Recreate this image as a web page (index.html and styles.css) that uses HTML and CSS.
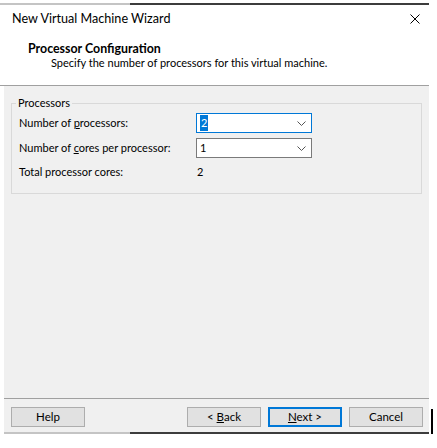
FILE: index.html
```html
<!DOCTYPE html>
<html lang="en">
<head>
<meta charset="utf-8">
<title>New Virtual Machine Wizard</title>
<link rel="stylesheet" href="styles.css">
</head>
<body>
<div class="window">
  <div class="frame-line"></div>
  <div class="titlebar">
    <span class="title">New Virtual Machine Wizard</span>
    <svg class="close" width="10" height="10" viewBox="0 0 10 10" aria-hidden="true">
      <path d="M0.5 0.5 L9.5 9.5 M9.5 0.5 L0.5 9.5" stroke="#000" stroke-width="1" fill="none"/>
    </svg>
  </div>
  <div class="header">
    <div class="heading">Processor Configuration</div>
    <div class="subheading">Specify the number of processors for this virtual machine.</div>
  </div>
  <div class="panel">
    <fieldset class="group">
      <legend class="legend">Processors</legend>
      <div class="rows">
        <span class="label">Number of <u>p</u>rocessors:</span>
        <div class="select focused">
          <span class="sel-text"><span class="highlight">2</span></span>
          <svg class="chev" width="9" height="5" viewBox="0 0 9 5" aria-hidden="true"><path d="M0.5 0.5 L4.5 4.5 L8.5 0.5" stroke="#555" stroke-width="1" fill="none"/></svg>
        </div>
        <span class="label">Number of <u>c</u>ores per processor:</span>
        <div class="select">
          <span class="sel-text">1</span>
          <svg class="chev" width="9" height="5" viewBox="0 0 9 5" aria-hidden="true"><path d="M0.5 0.5 L4.5 4.5 L8.5 0.5" stroke="#555" stroke-width="1" fill="none"/></svg>
        </div>
        <span class="label last">Total processor cores:</span>
        <span class="value last">2</span>
      </div>
    </fieldset>
    <div class="separator"></div>
    <div class="buttons">
      <button class="btn">Help</button>
      <div class="btn-group">
        <button class="btn">&lt; <u>B</u>ack</button>
        <button class="btn default"><u>N</u>ext &gt;</button>
        <button class="btn">Cancel</button>
      </div>
    </div>
  </div>
  <div class="frame-line bottom"></div>
  <div class="caret"></div>
</div>
</body>
</html>
```
FILE: styles.css
```css
html, body {
  margin: 0;
  padding: 0;
  background: #ffffff;
}

body {
  font-family: "Lato", "Liberation Sans", sans-serif;
  font-size: 11px;
  color: #000;
}

.window {
  position: relative;
  width: 429px;
  padding-top: 3px;
}

.frame-line {
  height: 2px;
  background: linear-gradient(to right, #c4c4c4 0, #c4c4c4 130px, #3c3c3c 130px, #3c3c3c 100%);
}

.frame-line.bottom {
  margin-left: 4px;
  background: linear-gradient(to right, #c4c4c4 0, #c4c4c4 126px, #3c3c3c 126px, #3c3c3c 100%);
}

.titlebar {
  height: 28px;
  display: flex;
  align-items: center;
  justify-content: space-between;
  padding: 0 9px 0 12px;
}

.title {
  font-size: 12.6px;
  line-height: 16px;
}

.close {
  display: block;
}

.header {
  height: 43px;
  padding: 9px 0 0 28px;
  border-bottom: 1px solid #a0a0a0;
}

.heading {
  font-weight: bold;
  font-size: 12.4px;
  line-height: 13px;
}

.subheading {
  line-height: 12px;
  margin-top: 2px;
  padding-left: 23px;
}

.panel {
  margin-left: 4px;
  height: 346px;
  background: #f0f0f0;
  display: flex;
  flex-direction: column;
  padding-top: 10px;
  box-sizing: border-box;
}

.group {
  margin: 0 7px;
  padding: 3px 7px 14px 7px;
  border: 1px solid #d9d9d9;
}

.legend {
  padding: 0 2px;
  margin-left: -3px;
  line-height: 14px;
}

.rows {
  display: grid;
  grid-template-columns: 177px 116px;
  row-gap: 5px;
  align-items: center;
}

.label, .value {
  line-height: 14px;
}

.label.last, .value.last {
  margin-top: 2px;
}

.value {
  padding-left: 1px;
}

.select {
  height: 20px;
  box-sizing: border-box;
  border: 1px solid #7a7a7a;
  background: #fff;
  display: flex;
  align-items: center;
  justify-content: space-between;
  padding: 0 5px 0 3px;
}

.select.focused {
  border-color: #0078d7;
}

.sel-text {
  line-height: 14px;
}

.highlight {
  display: inline-block;
  background: #0078d7;
  color: #fff;
  padding: 1px 1px;
  line-height: 14px;
}

.chev {
  display: block;
}

.separator {
  margin-top: auto;
  height: 1px;
  background: #a0a0a0;
}

.buttons {
  display: flex;
  justify-content: space-between;
  padding: 8px 6px 5px 7px;
}

.btn-group {
  display: flex;
  gap: 7px;
}

.btn {
  width: 74px;
  height: 20px;
  box-sizing: border-box;
  margin: 0;
  padding: 0;
  border: 1px solid #adadad;
  background: #e1e1e1;
  font-family: inherit;
  font-size: 11.5px;
  line-height: 14px;
  color: #000;
}

.btn.default {
  border: 2px solid #0078d7;
}

.caret {
  position: absolute;
  left: 431px;
  top: 409px;
  width: 2px;
  height: 31px;
  background: #000;
}
```
